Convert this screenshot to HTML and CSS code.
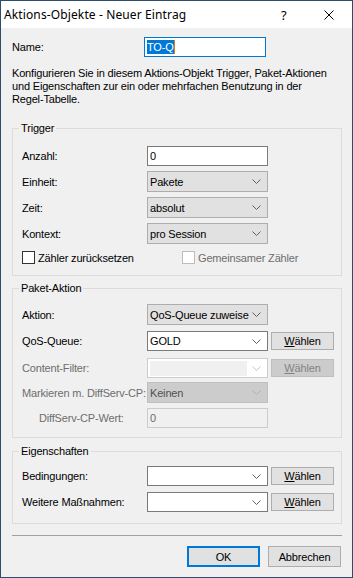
FILE: index.html
```html
<!DOCTYPE html>
<html lang="de">
<head>
<meta charset="utf-8">
<title>Aktions-Objekte - Neuer Eintrag</title>
<link rel="stylesheet" href="styles.css">
</head>
<body>
<div class="window">
  <div class="titlebar">
    <span class="title">Aktions-Objekte - Neuer Eintrag</span>
    <span class="tbtn help">?</span>
    <span class="tbtn close"><svg width="10" height="10" viewBox="0 0 10 10"><path d="M0.5 0.5 L9.5 9.5 M9.5 0.5 L0.5 9.5" stroke="#000" stroke-width="1" fill="none"/></svg></span>
  </div>
  <div class="content">
    <div class="name-row">
      <span class="lbl">Name:</span>
      <div class="input focus"><span class="sel">TO-Q</span><span class="caret"></span></div>
    </div>
    <p class="desc">Konfigurieren Sie in diesem Aktions-Objekt Trigger, Paket-Aktionen<br>und Eigenschaften zur ein oder mehrfachen Benutzung in der<br>Regel-Tabelle.</p>

    <fieldset class="group trigger">
      <legend>Trigger</legend>
      <div class="row h20">
        <span class="lbl">Anzahl:</span>
        <div class="input"><span class="val">0</span></div>
      </div>
      <div class="row h21 mt5">
        <span class="lbl">Einheit:</span>
        <div class="combo list"><span class="val">Pakete</span><svg class="chev" width="9" height="5" viewBox="0 0 9 5"><path d="M0.5 0.5 L4.5 4.5 L8.5 0.5" stroke="#606060" fill="none"/></svg></div>
      </div>
      <div class="row h21 mt5">
        <span class="lbl">Zeit:</span>
        <div class="combo list"><span class="val">absolut</span><svg class="chev" width="9" height="5" viewBox="0 0 9 5"><path d="M0.5 0.5 L4.5 4.5 L8.5 0.5" stroke="#606060" fill="none"/></svg></div>
      </div>
      <div class="row h21 mt5">
        <span class="lbl">Kontext:</span>
        <div class="combo list"><span class="val">pro Session</span><svg class="chev" width="9" height="5" viewBox="0 0 9 5"><path d="M0.5 0.5 L4.5 4.5 L8.5 0.5" stroke="#606060" fill="none"/></svg></div>
      </div>
      <div class="checks">
        <span class="check"><span class="box"></span>Zähler zurücksetzen</span>
        <span class="check disabled"><span class="box"></span>Gemeinsamer Zähler</span>
      </div>
    </fieldset>

    <fieldset class="group paket">
      <legend>Paket-Aktion</legend>
      <div class="row h21">
        <span class="lbl">Aktion:</span>
        <div class="combo list"><span class="val">QoS-Queue zuweise</span><svg class="chev" width="9" height="5" viewBox="0 0 9 5"><path d="M0.5 0.5 L4.5 4.5 L8.5 0.5" stroke="#606060" fill="none"/></svg></div>
      </div>
      <div class="row h20 mt6">
        <span class="lbl">QoS-Queue:</span>
        <div class="combo edit"><span class="val">GOLD</span><svg class="chev" width="9" height="5" viewBox="0 0 9 5"><path d="M0.5 0.5 L4.5 4.5 L8.5 0.5" stroke="#606060" fill="none"/></svg></div>
        <button class="btn small"><u>W</u>ählen</button>
      </div>
      <div class="row h20 mt7 disabled">
        <span class="lbl">Content-Filter:</span>
        <div class="combo edit off"><span class="field"></span><svg class="chev" width="9" height="5" viewBox="0 0 9 5"><path d="M0.5 0.5 L4.5 4.5 L8.5 0.5" stroke="#c4c4c4" fill="none"/></svg></div>
        <button class="btn small off"><u>W</u>ählen</button>
      </div>
      <div class="row h21 mt4 disabled">
        <span class="lbl">Markieren m. DiffServ-CP:</span>
        <div class="combo list off"><span class="val">Keinen</span><svg class="chev" width="9" height="5" viewBox="0 0 9 5"><path d="M0.5 0.5 L4.5 4.5 L8.5 0.5" stroke="#b0b0b0" fill="none"/></svg></div>
      </div>
      <div class="row h20 mt5 disabled">
        <span class="lbl indent">DiffServ-CP-Wert:</span>
        <div class="input off"><span class="val">0</span></div>
      </div>
    </fieldset>

    <fieldset class="group eig">
      <legend>Eigenschaften</legend>
      <div class="row h20">
        <span class="lbl">Bedingungen:</span>
        <div class="combo edit"><span class="val"></span><svg class="chev" width="9" height="5" viewBox="0 0 9 5"><path d="M0.5 0.5 L4.5 4.5 L8.5 0.5" stroke="#606060" fill="none"/></svg></div>
        <button class="btn small"><u>W</u>ählen</button>
      </div>
      <div class="row h20 mt6">
        <span class="lbl">Weitere Maßnahmen:</span>
        <div class="combo edit"><span class="val"></span><svg class="chev" width="9" height="5" viewBox="0 0 9 5"><path d="M0.5 0.5 L4.5 4.5 L8.5 0.5" stroke="#606060" fill="none"/></svg></div>
        <button class="btn small"><u>W</u>ählen</button>
      </div>
    </fieldset>

    <div class="separator"></div>
    <div class="actions">
      <button class="btn big default">OK</button>
      <button class="btn big">Abbrechen</button>
    </div>
  </div>
</div>
</body>
</html>
```

FILE: styles.css
```css
html, body {
  margin: 0;
  padding: 0;
}
body {
  width: 353px;
  height: 578px;
  background: #f0f0f0;
  font-family: "Liberation Sans", Arial, sans-serif;
  font-size: 11px;
  letter-spacing: -0.17px;
  color: #000;
}
.window {
  box-sizing: border-box;
  width: 353px;
  height: 578px;
  border: 1px solid #2d4d6b;
  background: #f0f0f0;
  display: flex;
  flex-direction: column;
}
.titlebar {
  height: 27px;
  flex: none;
  background: #fff;
  display: flex;
  align-items: center;
  font-family: "Noto Sans", "Open Sans", sans-serif;
  font-size: 12px;
  letter-spacing: 0.12px;
}
.title {
  flex: 1;
  padding-left: 3px;
  white-space: nowrap;
}
.tbtn {
  width: 46px;
  height: 27px;
  display: flex;
  align-items: center;
  justify-content: center;
}
.help {
  font-size: 13px;
  padding-left: 2px;
  box-sizing: border-box;
}
.content {
  padding: 9px 10px 0 11px;
}
.name-row {
  display: grid;
  grid-template-columns: 132px 122px;
  height: 20px;
  align-items: center;
}
.lbl {
  white-space: nowrap;
}
.input {
  box-sizing: border-box;
  height: 20px;
  border: 1px solid #7a7a7a;
  background: #fff;
  display: flex;
  align-items: center;
  padding-left: 2px;
}
.input.focus {
  border-color: #0078d7;
}
.sel {
  background: #0078d7;
  color: #fff;
  line-height: 14px;
}
.caret {
  width: 1px;
  height: 14px;
  background: #e07a10;
}
.input.off {
  background: #f0f0f0;
  border-color: #cccccc;
  color: #6d6d6d;
}
.desc {
  margin: 10px 0 0;
  line-height: 13px;
}
.group {
  margin: 0;
  padding: 0 9px;
  border: 1px solid #dcdcdc;
  min-width: 0;
}
.group legend {
  padding: 0 2px;
  margin-left: -3px;
  line-height: 13px;
}
.trigger {
  margin-top: 16px;
  padding-top: 11px;
  padding-bottom: 11px;
}
.paket {
  margin-top: 6px;
  padding-top: 9px;
  padding-bottom: 9px;
}
.eig {
  margin-top: 7px;
  padding-top: 8px;
  padding-bottom: 11px;
}
.row {
  display: grid;
  grid-template-columns: 122px 121px 63px;
  column-gap: 3px;
  align-items: center;
}
.h20 { height: 20px; }
.h21 { height: 21px; }
.mt4 { margin-top: 4px; }
.mt5 { margin-top: 5px; }
.mt6 { margin-top: 6px; }
.mt7 { margin-top: 7px; }
.row .input, .row .combo {
  height: 100%;
}
.row.disabled .lbl {
  color: #6d6d6d;
}
.indent {
  padding-left: 17px;
}
.combo {
  box-sizing: border-box;
  display: flex;
  align-items: center;
  padding-left: 2px;
  padding-right: 6px;
  overflow: hidden;
}
.combo .val {
  flex: 1;
  white-space: nowrap;
  overflow: hidden;
}
.combo .chev {
  flex: none;
  margin-left: 2px;
}
.combo.list {
  border: 1px solid #adadad;
  background: #e1e1e1;
}
.combo.edit {
  border: 1px solid #7a7a7a;
  background: #fff;
}
.combo.edit.off {
  border-color: #cccccc;
  padding-left: 2px;
}
.combo .field {
  flex: none;
  width: 97px;
  height: 15px;
  background: #f0f0f0;
  margin-right: auto;
}
.combo.list.off {
  background: #cccccc;
  border-color: #bfbfbf;
  color: #505050;
}
.checks {
  margin-top: 7px;
  height: 13px;
  display: grid;
  grid-template-columns: 160px 1fr;
  align-items: center;
}
.check {
  display: flex;
  align-items: center;
  white-space: nowrap;
}
.check .box {
  box-sizing: border-box;
  width: 13px;
  height: 13px;
  border: 1px solid #333;
  background: #fff;
  margin-right: 3px;
}
.check.disabled {
  color: #6d6d6d;
}
.check.disabled .box {
  border-color: #bcbcbc;
}
.btn {
  box-sizing: border-box;
  font-family: "Liberation Sans", Arial, sans-serif;
  font-size: 11px;
  letter-spacing: -0.17px;
  color: #000;
  background: #e1e1e1;
  border: 1px solid #adadad;
  padding: 0;
  margin: 0;
  border-radius: 0;
}
.btn.small {
  width: 63px;
  height: 18px;
}
.btn.off {
  background: #cccccc;
  border-color: #bfbfbf;
  color: #838383;
}
.separator {
  margin-top: 11px;
  border-top: 1px solid #a0a0a0;
}
.actions {
  margin-top: 10px;
  margin-right: 1px;
  display: flex;
  justify-content: flex-end;
  gap: 8px;
}
.btn.big {
  width: 73px;
  height: 21px;
}
.btn.default {
  border: 2px solid #0078d7;
}
```
